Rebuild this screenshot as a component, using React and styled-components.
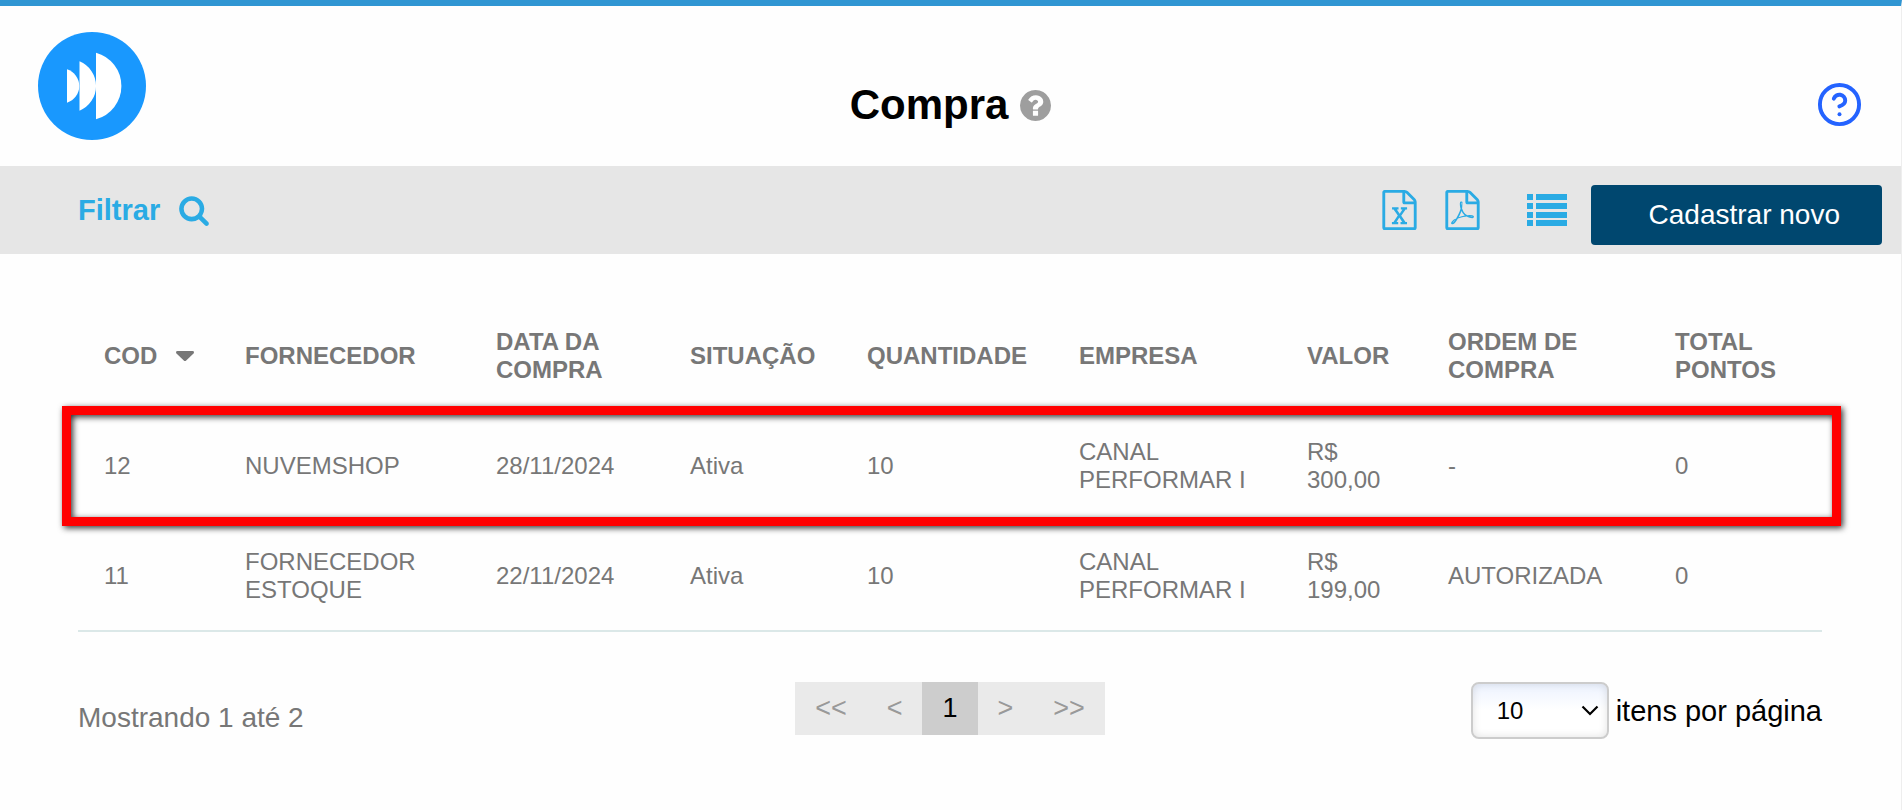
import React, { useState } from 'react';
import styled, { createGlobalStyle } from 'styled-components';
import { CircleHelp } from 'lucide-react';

const purchases = [
  {
    cod: '12',
    fornecedor: 'NUVEMSHOP',
    data: '28/11/2024',
    situacao: 'Ativa',
    quantidade: '10',
    empresa: 'CANAL PERFORMAR I',
    valor: 'R$ 300,00',
    ordem: '-',
    pontos: '0'
  },
  {
    cod: '11',
    fornecedor: 'FORNECEDOR ESTOQUE',
    data: '22/11/2024',
    situacao: 'Ativa',
    quantidade: '10',
    empresa: 'CANAL PERFORMAR I',
    valor: 'R$ 199,00',
    ordem: 'AUTORIZADA',
    pontos: '0'
  }
]

const columns = [
  { key: 'cod', label: 'COD', width: 141, sorted: true },
  { key: 'fornecedor', label: 'FORNECEDOR', width: 251 },
  { key: 'data', label: 'DATA DA COMPRA', width: 194 },
  { key: 'situacao', label: 'SITUAÇÃO', width: 177 },
  { key: 'quantidade', label: 'QUANTIDADE', width: 212 },
  { key: 'empresa', label: 'EMPRESA', width: 228 },
  { key: 'valor', label: 'VALOR', width: 141 },
  { key: 'ordem', label: 'ORDEM DE COMPRA', width: 227 },
  { key: 'pontos', label: 'TOTAL PONTOS', width: 173 }
]

const fileOutline = 'M1596 380q28 28 48 76t20 88v1152q0 40-28 68t-68 28h-1344q-40 0-68-28t-28-68v-1600q0-40 28-68t68-28h896q40 0 88 20t76 48zm-444-244v376h376q-10-29-22-41l-313-313q-12-12-41-22zm384 1528v-1024h-416q-40 0-68-28t-28-68v-416h-768v1536h1280z'

const Logo = () => (
  <svg width="108" height="108" viewBox="0 0 108 108" role="img" aria-label="Logo">
    <circle cx="54" cy="54" r="54" fill="#1998fe" />
    <g fill="#fff">
      <path d="M29 37.3a17.5 17.5 0 0 1 0 33.4z" />
      <path d="M41.5 29.3a26.7 26.7 0 0 1 0 49.4z" />
      <path d="M58 20.8a34.4 34.4 0 0 1 0 66.4z" />
    </g>
  </svg>
)

const SearchIcon = () => (
  <svg width="32" height="32" viewBox="0 0 1792 1792" fill="currentColor" aria-hidden="true">
    <path d="M1216 832q0-185-131.5-316.5t-316.5-131.5-316.5 131.5-131.5 316.5 131.5 316.5 316.5 131.5 316.5-131.5 131.5-316.5zm512 832q0 52-38 90t-90 38q-54 0-90-38l-343-342q-179 124-399 124-143 0-273.5-55.5t-225-150-150-225-55.5-273.5 55.5-273.5 150-225 225-150 273.5-55.5 273.5 55.5 225 150 150 225 55.5 273.5q0 220-124 399l343 343q37 37 37 90z" />
  </svg>
)

const QuestionIcon = () => (
  <svg width="31" height="31" viewBox="128 128 1536 1536" fill="#9e9e9e" aria-hidden="true">
    <path d="M1024 1376v-192q0-14-9-23t-23-9h-192q-14 0-23 9t-9 23v192q0 14 9 23t23 9h192q14 0 23-9t9-23zm256-672q0-88-55.5-163t-138.5-116-170-41q-243 0-371 213-15 24 8 42l132 100q7 6 19 6 16 0 25-12 53-68 86-92 34-24 86-24 48 0 85.5 26t37.5 59q0 38-20 61t-68 45q-63 28-115.5 86.5t-52.5 125.5v36q0 14 9 23t23 9h192q14 0 23-9t9-23q0-19 21.5-49.5t54.5-49.5q32-18 49-28.5t46-35 44.5-48 28-60.5 12.5-81zm384 192q0 209-103 385.5t-279.5 279.5-385.5 103-385.5-103-279.5-279.5-103-385.5 103-385.5 279.5-279.5 385.5-103 385.5 103 279.5 279.5 103 385.5z" />
  </svg>
)

const ExcelIcon = () => (
  <svg width="35" height="40" viewBox="128 0 1536 1792" fill="currentColor" aria-hidden="true">
    <path d={fileOutline + 'm-979-234v106h281v-106h-75l103-161q5-7 10-16.5t7.5-13.5 3.5-4h2q1 4 5 10 2 4 4.5 7.5t6 8 6.5 8.5l107 161h-76v106h291v-106h-68l-192-273 195-282h67v-107h-279v107h74l-103 159q-4 7-10 16.5t-9 13.5l-2 3h-2q-1-4-5-10-6-11-17-23l-106-159h76v-107h-290v107h68l189 272-194 283h-68z'} />
  </svg>
)

const PdfIcon = () => (
  <svg width="35" height="40" viewBox="128 0 1536 1792" fill="currentColor" aria-hidden="true">
    <path d={fileOutline + 'm-514-593q33 26 84 56 59-7 117-7 147 0 177 49 16 22 2 52 0 1-1 2l-2 2v1q-6 38-71 38-48 0-115-20t-130-53q-221 24-392 83-153 262-242 262-15 0-28-7l-24-12q-1-1-6-5-10-10-6-36 9-40 56-91.5t132-96.5q14-9 23 6 2 2 2 4 52-85 107-197 68-136 104-262-24-82-30.5-159.5t6.5-127.5q11-40 42-40h22q23 0 35 15 18 21 9 68-2 6-4 8 1 3 1 8v30q-2 123-14 192 55 164 146 238zm-576 411q52-24 137-158-51 40-87.5 84t-49.5 74zm398-920q-15 42-2 132 1-7 7-44 0-3 7-43 1-4 4-8-1-1-1-2-1-2-1-3-1-22-13-36 0 1-1 2v2zm-124 661q135-54 284-81-2-1-13-9.5t-16-13.5q-76-67-127-176-27 86-83 197-30 56-45 83zm646-16q-24-24-140-24 76 28 124 28 14 0 18-1 0-1-2-3z'} />
  </svg>
)

const ListIcon = () => (
  <svg width="40" height="32" viewBox="0 0 40 32" fill="currentColor" aria-hidden="true">
    {[0, 9, 18, 26].map((y) => (
      <g key={y}>
        <rect x="0" y={y} width="6" height="6" />
        <rect x="9" y={y} width="31" height="6" />
      </g>
    ))}
  </svg>
)

const SortIcon = () => (
  <svg width="18" height="10" viewBox="0 0 18 10" fill="currentColor" aria-hidden="true">
    <path d="M1.5 0h15q1.5 0 1.5 1.3 0 .6-.5 1.1L10.2 9.4q-1.2 1-2.4 0L.5 2.4Q0 1.9 0 1.3 0 0 1.5 0z" />
  </svg>
)

const App = () => {

  const [perPage, setPerPage] = useState('10')

  return (
    <Page>
      <GlobalStyle />
      <Header>
        <LogoLink href="#"><Logo /></LogoLink>
        <TitleGroup>
          <h1>Compra</h1>
          <QuestionIcon />
        </TitleGroup>
        <HelpButton type="button" aria-label="Ajuda">
          <CircleHelp size={47} />
        </HelpButton>
      </Header>

      <Toolbar>
        <FilterButton type="button">
          Filtrar
          <SearchIcon />
        </FilterButton>
        <Actions>
          <ExportGroup>
            <IconButton type="button" aria-label="Exportar para Excel"><ExcelIcon /></IconButton>
            <IconButton type="button" aria-label="Exportar para PDF"><PdfIcon /></IconButton>
          </ExportGroup>
          <IconButton type="button" aria-label="Colunas"><ListIcon /></IconButton>
          <PrimaryButton type="button">Cadastrar novo</PrimaryButton>
        </Actions>
      </Toolbar>

      <Content>
        <TableWrapper>
          <Table>
            <colgroup>
              {columns.map((column) => <Column key={column.key} $width={column.width} />)}
            </colgroup>
            <thead>
              <tr>
                {columns.map((column) => (
                  <HeadCell key={column.key} scope="col">
                    {column.sorted
                      ? <SortLabel>{column.label}<SortIcon /></SortLabel>
                      : column.label}
                  </HeadCell>
                ))}
              </tr>
            </thead>
            <tbody>
              {purchases.map((purchase) => (
                <tr key={purchase.cod}>
                  {columns.map((column) => (
                    <Cell key={column.key}>{purchase[column.key]}</Cell>
                  ))}
                </tr>
              ))}
            </tbody>
          </Table>
          <Highlight />
        </TableWrapper>

        <Footer>
          <Summary>Mostrando 1 até 2</Summary>
          <Pagination aria-label="Paginação">
            <PageButton type="button">&lt;&lt;</PageButton>
            <PageButton type="button">&lt;</PageButton>
            <PageButton type="button" $active>1</PageButton>
            <PageButton type="button">&gt;</PageButton>
            <PageButton type="button">&gt;&gt;</PageButton>
          </Pagination>
          <PerPage>
            <SelectBox>
              <Select id="perPage" value={perPage} onChange={(e) => setPerPage(e.target.value)}>
                <option value="10">10</option>
                <option value="25">25</option>
                <option value="50">50</option>
              </Select>
              <Chevron width="18" height="11" viewBox="0 0 18 11" aria-hidden="true">
                <path d="M1.5 1.5L9 9l7.5-7.5" fill="none" stroke="#000" strokeWidth="2.2" />
              </Chevron>
            </SelectBox>
            <label htmlFor="perPage">itens por página</label>
          </PerPage>
        </Footer>
      </Content>
    </Page>
  )
}

const GlobalStyle = createGlobalStyle`
  * {
    box-sizing: border-box;
  }

  body {
    margin: 0;
    background: #fefefe;
    color: #000;
    font-family: "Liberation Sans", Arial, sans-serif;
  }

  button, select {
    font-family: inherit;
  }

  button {
    border: none;
    padding: 0;
    background: none;
    cursor: pointer;
  }

  svg {
    display: block;
  }
`;

const Page = styled.div`
  min-height: 100vh;
  border-top: 6px solid #3096d3;
  border-right: 1px solid #eee;
`;

const Header = styled.header`
  display: grid;
  grid-template-columns: 1fr auto 1fr;
  align-items: center;
  padding: 26px 38px;
`;

const LogoLink = styled.a`
  justify-self: start;
`;

const TitleGroup = styled.div`
  display: flex;
  align-items: center;
  gap: 12px;
  padding-top: 38px;

  h1 {
    margin: 0;
    font-size: 42px;
    line-height: 48px;
  }
`;

const HelpButton = styled.button`
  justify-self: end;
  margin-top: 36px;
  color: #2463ff;
`;

const Toolbar = styled.div`
  display: flex;
  justify-content: space-between;
  align-items: center;
  height: 88px;
  padding: 0 19px 0 78px;
  background: #e6e6e6;
`;

const FilterButton = styled.button`
  display: flex;
  align-items: center;
  gap: 18px;
  color: #2aabe4;
  font-size: 29px;
  font-weight: bold;
`;

const Actions = styled.div`
  display: flex;
  align-items: center;
  gap: 24px;
`;

const ExportGroup = styled.div`
  display: flex;
  gap: 28px;
  margin-right: 23px;
`;

const IconButton = styled.button`
  color: #2aabe4;
`;

const PrimaryButton = styled.button`
  height: 60px;
  margin-top: 10px;
  padding: 0 42px 0 58px;
  border-radius: 4px;
  background: #00476f;
  color: #fff;
  font-size: 28px;
`;

const Content = styled.main`
  padding: 47px 79px 40px 78px;
`;

const TableWrapper = styled.div`
  position: relative;
`;

const Table = styled.table`
  width: 100%;
  table-layout: fixed;
  border-collapse: collapse;
  color: #777;
  font-size: 24px;
  line-height: 28px;
  text-align: left;

  tbody tr {
    border-bottom: 2px solid #dbe8e8;
  }
`;

const Column = styled.col`
  width: ${(props) => props.$width}px;
`;

const HeadCell = styled.th`
  height: 110px;
  padding: 0 20px 0 26px;
`;

const Cell = styled.td`
  height: 110px;
  padding: 0 20px 0 26px;
`;

const SortLabel = styled.span`
  display: flex;
  align-items: center;
  gap: 19px;
`;

/* frame laid over the newest purchase */
const Highlight = styled.div`
  position: absolute;
  top: 105px;
  left: -16px;
  right: -19px;
  height: 120px;
  border: 9px solid #f00;
  filter: drop-shadow(2px 2px 3px rgba(0, 0, 0, 0.8));
  pointer-events: none;
`;

const Footer = styled.div`
  display: grid;
  grid-template-columns: 1fr auto 1fr;
  align-items: start;
  margin-top: 50px;
`;

const Summary = styled.p`
  margin: 0;
  padding-top: 20px;
  color: #777;
  font-size: 28px;
  line-height: 32px;
`;

const Pagination = styled.nav`
  display: flex;
  background: #eaeaea;
`;

const PageButton = styled.button`
  height: 53px;
  padding: 0 20px;
  background: ${(props) => props.$active ? '#cdcdcd' : 'transparent'};
  color: ${(props) => props.$active ? '#000' : '#999'};
  font-size: 27px;
`;

const PerPage = styled.div`
  display: flex;
  align-items: center;
  justify-self: end;
  gap: 7px;
  font-size: 29px;
  line-height: 32px;
`;

const SelectBox = styled.div`
  position: relative;
`;

const Select = styled.select`
  appearance: none;
  width: 138px;
  height: 57px;
  padding: 0 24px;
  border: 2px solid #ccc;
  border-radius: 8px;
  background: linear-gradient(#edf3ff, #fff 50%);
  box-shadow: inset 0 0 8px rgba(0, 0, 0, 0.12);
  color: #000;
  font-size: 24px;
`;

const Chevron = styled.svg`
  position: absolute;
  top: 23px;
  right: 10px;
  pointer-events: none;
`;

export default App
